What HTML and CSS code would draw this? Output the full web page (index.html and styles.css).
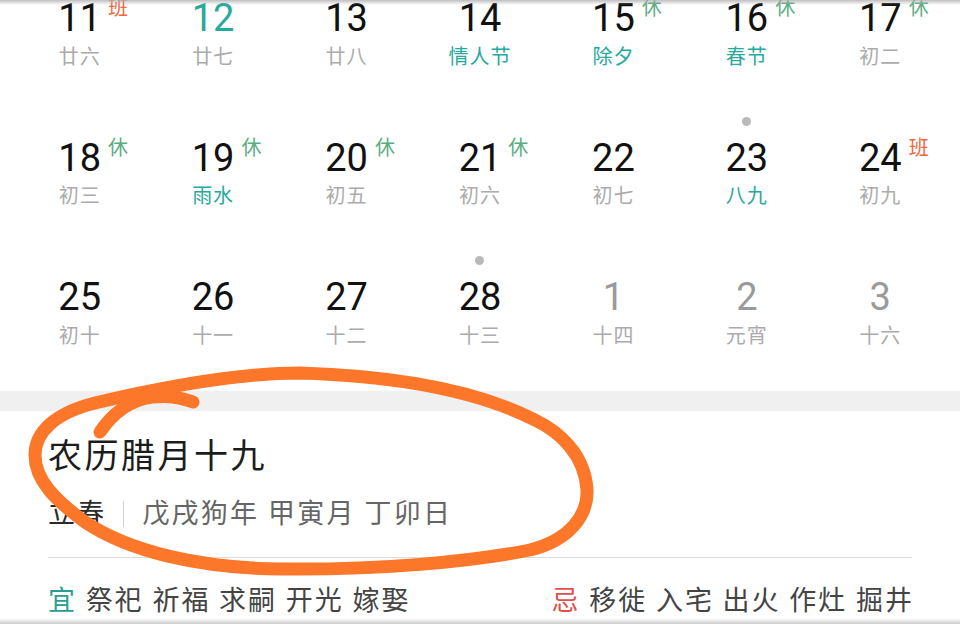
FILE: index.html
```html
<!DOCTYPE html>
<html lang="zh-CN">
<head>
<meta charset="utf-8">
<title>日历</title>
<link rel="stylesheet" href="styles.css">
</head>
<body>
<div class="page">
  <div class="cal">
    <div class="cell"><span class="dot none"></span><span class="num">11<span class="mark work">班</span></span><span class="lunar">廿六</span></div>
    <div class="cell"><span class="dot none"></span><span class="num today">12</span><span class="lunar">廿七</span></div>
    <div class="cell"><span class="dot none"></span><span class="num">13</span><span class="lunar">廿八</span></div>
    <div class="cell"><span class="dot none"></span><span class="num">14</span><span class="lunar fest">情人节</span></div>
    <div class="cell"><span class="dot none"></span><span class="num">15<span class="mark rest">休</span></span><span class="lunar fest">除夕</span></div>
    <div class="cell"><span class="dot none"></span><span class="num">16<span class="mark rest">休</span></span><span class="lunar fest">春节</span></div>
    <div class="cell"><span class="dot none"></span><span class="num">17<span class="mark rest">休</span></span><span class="lunar">初二</span></div>

    <div class="cell"><span class="dot none"></span><span class="num">18<span class="mark rest">休</span></span><span class="lunar">初三</span></div>
    <div class="cell"><span class="dot none"></span><span class="num">19<span class="mark rest">休</span></span><span class="lunar fest">雨水</span></div>
    <div class="cell"><span class="dot none"></span><span class="num">20<span class="mark rest">休</span></span><span class="lunar">初五</span></div>
    <div class="cell"><span class="dot none"></span><span class="num">21<span class="mark rest">休</span></span><span class="lunar">初六</span></div>
    <div class="cell"><span class="dot none"></span><span class="num">22</span><span class="lunar">初七</span></div>
    <div class="cell"><span class="dot"></span><span class="num">23</span><span class="lunar fest">八九</span></div>
    <div class="cell"><span class="dot none"></span><span class="num">24<span class="mark work">班</span></span><span class="lunar">初九</span></div>

    <div class="cell"><span class="dot none"></span><span class="num">25</span><span class="lunar">初十</span></div>
    <div class="cell"><span class="dot none"></span><span class="num">26</span><span class="lunar">十一</span></div>
    <div class="cell"><span class="dot none"></span><span class="num">27</span><span class="lunar">十二</span></div>
    <div class="cell"><span class="dot"></span><span class="num">28</span><span class="lunar">十三</span></div>
    <div class="cell"><span class="dot none"></span><span class="num other">1</span><span class="lunar">十四</span></div>
    <div class="cell"><span class="dot none"></span><span class="num other">2</span><span class="lunar">元宵</span></div>
    <div class="cell"><span class="dot none"></span><span class="num other">3</span><span class="lunar">十六</span></div>
  </div>

  <div class="band"></div>

  <section class="info">
    <h1 class="title">农历腊月十九</h1>
    <p class="sub"><span class="term">立春</span><span class="sep"></span><span class="gz">戊戌狗年 甲寅月 丁卯日</span></p>
    <div class="divider"></div>
    <div class="yiji">
      <p class="group"><span class="yi">宜</span> 祭祀 祈福 求嗣 开光 嫁娶</p>
      <p class="group right"><span class="ji">忌</span> 移徙 入宅 出火 作灶 掘井</p>
    </div>
  </section>

  <div class="shade-top"></div>
  <div class="shade-bottom"></div>

  <svg class="scribble" viewBox="0 0 960 624" width="960" height="624" aria-hidden="true">
    <path d="M300,373 C230,373 150,390 95,403 C55,413 35,432 35,455 C35,480 55,500 85,522 C130,552 200,568 280,569 C380,570 470,562 530,550 C570,540 588,515 587,490 C585,455 560,432 535,420 C480,392 400,376 300,373 Z"/>
    <path d="M100,432 C112,414 130,400 152,397 C170,395 183,398 193,402"/>
  </svg>
</div>
</body>
</html>
```

FILE: styles.css
```css
* {
  box-sizing: border-box;
  margin: 0;
  padding: 0;
}

html,
body {
  width: 960px;
  height: 624px;
  overflow: hidden;
  background: #fff;
}

body {
  font-family: Roboto, "Noto Sans CJK SC", sans-serif;
  color: #111;
}

.page {
  position: relative;
  width: 960px;
  height: 624px;
  overflow: hidden;
}

/* calendar grid */
.cal {
  display: grid;
  grid-template-columns: repeat(7, 1fr);
  grid-auto-rows: 139.5px;
  padding: 0 13px;
  margin-top: -43px;
}

.cell {
  display: flex;
  flex-direction: column;
  align-items: center;
  padding-top: 20px;
}

.dot {
  width: 9px;
  height: 9px;
  border-radius: 50%;
  background: #b9b9b9;
  margin-bottom: 10px;
}

.dot.none {
  visibility: hidden;
}

.num {
  position: relative;
  font-size: 38px;
  line-height: 44px;
  color: #111;
}

.num.today {
  color: #27a99b;
}

.num.other {
  color: #9a9a9a;
}

.mark {
  position: absolute;
  left: calc(100% + 7px);
  top: 1px;
  font-family: "Noto Sans CJK SC", sans-serif;
  font-size: 20px;
  line-height: 20px;
  white-space: nowrap;
}

.mark.rest {
  color: #5aad82;
}

.mark.work {
  color: #f0673a;
}

.lunar {
  font-family: "Noto Sans CJK SC", sans-serif;
  font-size: 20px;
  line-height: 24px;
  letter-spacing: 1px;
  margin-top: 3.5px;
  color: #ababab;
}

.lunar.fest {
  color: #27a99b;
}

.band {
  height: 20px;
  margin-top: 15px;
  background: #f0f0f0;
}

/* info section */
.info {
  padding: 25px 48px 0;
  font-family: Roboto, "Noto Sans CJK SC", sans-serif;
}

.title {
  font-size: 34px;
  line-height: 40px;
  font-weight: 400;
  letter-spacing: 2.5px;
  color: #1c1c1c;
}

.sub {
  display: flex;
  align-items: center;
  margin-top: 21px;
  font-size: 27px;
  line-height: 34px;
  letter-spacing: 2.2px;
  color: #666;
}

.term {
  color: #2a2a2a;
}

.sep {
  display: inline-block;
  width: 1px;
  height: 26px;
  background: #cfcfcf;
  margin: 0 18px 0 17px;
}

.divider {
  height: 1px;
  margin-top: 26px;
  background: #dcdcdc;
}

.yiji {
  display: flex;
  justify-content: space-between;
  margin-top: 26px;
}

.group {
  font-size: 27px;
  line-height: 34px;
  letter-spacing: 2px;
  color: #444;
}

.group.right {
  margin-right: -2px;
}

.yi {
  color: #2a9e90;
}

.ji {
  color: #e0514d;
}

/* edge shading of the screenshot */
.shade-top {
  position: absolute;
  left: 0;
  top: 0;
  width: 960px;
  height: 5px;
  background: linear-gradient(rgba(170, 170, 170, 0.75), rgba(255, 255, 255, 0));
}

.shade-bottom {
  position: absolute;
  left: 0;
  bottom: 0;
  width: 960px;
  height: 6px;
  background: linear-gradient(rgba(255, 255, 255, 0), rgba(200, 200, 200, 0.9));
}

/* hand-drawn annotation */
.scribble {
  position: absolute;
  left: 0;
  top: 0;
  pointer-events: none;
}

.scribble path {
  fill: none;
  stroke: #fd772b;
  stroke-width: 13;
  stroke-linecap: round;
  stroke-linejoin: round;
}
```
